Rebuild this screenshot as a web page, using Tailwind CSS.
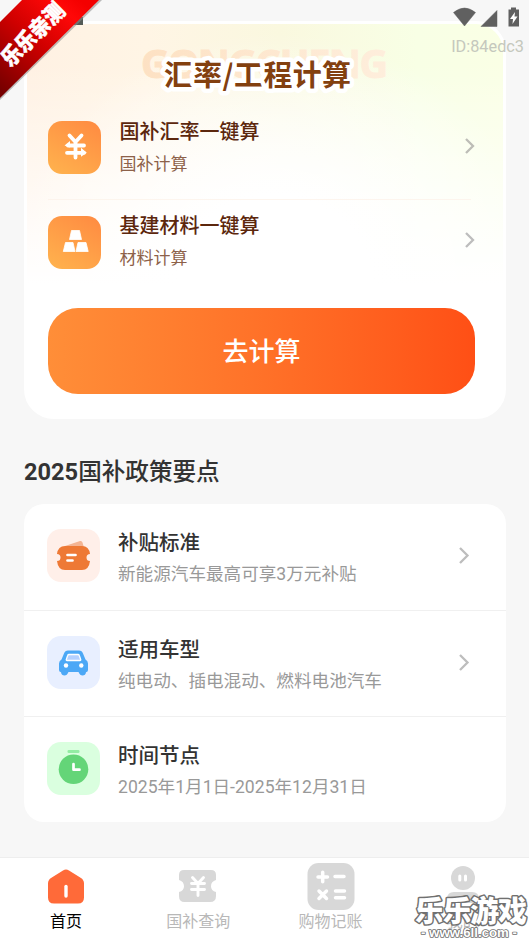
<!DOCTYPE html>
<html lang="zh-CN">
<head>
<meta charset="utf-8">
<meta name="viewport" content="width=device-width, initial-scale=1">
<title>国补计算</title>
<script src="https://cdn.jsdelivr.net/npm/@tailwindcss/browser@4"></script>
</head>
<body class="bg-[#f7f7f7] font-['Roboto','Noto_Sans_CJK_SC',sans-serif]">
<div class="relative flex h-[942px] w-[529px] flex-col overflow-hidden whitespace-nowrap">

  <main class="flex-1 px-6 pt-[21px] pr-[23px]">
    <!-- Calculator card -->
    <section class="flex h-[398px] flex-col rounded-[30px] border-[3px] border-white bg-white bg-[radial-gradient(ellipse_270px_250px_at_52%_66%,#ffffff_35%,transparent),linear-gradient(to_bottom,transparent_0,transparent_40px,#ffffff_260px),linear-gradient(to_right,#fff1e3,#fff5e5_25%,#faf8df_53%,#f8ffe5_82%,#faffe5)] pr-[22px] pl-[21.4px]">
      <div class="relative h-[72px] shrink-0">
        <svg class="absolute top-[19px] left-[92px] overflow-visible" width="260" height="48" viewBox="0 0 260 48">
          <defs><linearGradient id="ghost" x1="0" x2="1"><stop stop-color="#fde1c3"/><stop offset="1" stop-color="#feeedc"/></linearGradient></defs>
          <text x="1" y="35" textLength="247" font-family="Noto Sans, sans-serif" font-weight="700" font-size="39.500" fill="url(#ghost)" stroke="url(#ghost)" stroke-width="1">GONGCHENG</text>
        </svg>
        <svg class="absolute top-[28px] left-[106px] overflow-visible" width="208" height="50" viewBox="0 0 208 50">
          <text x="10" y="34" textLength="187" font-family="Noto Sans CJK SC, sans-serif" font-weight="700" font-size="29" fill="#83400f" stroke="#ffffff" stroke-width="9" stroke-linejoin="round" paint-order="stroke">汇率/工程计算</text>
        </svg>
      </div>
      <div class="mr-[10px] flex h-[104px] items-center border-b border-[#fdf3ea]/80 pb-[1px]">
        <svg class="shrink-0" width="53" height="53" viewBox="0 0 53 53">
          <defs><linearGradient id="tile" x1="0.8" y1="0" x2="0.2" y2="1"><stop stop-color="#ff8d42"/><stop offset="1" stop-color="#ffb04d"/></linearGradient></defs>
          <rect width="53" height="53" rx="14" fill="url(#tile)"/>
          <g stroke="#fff" stroke-width="3.800" stroke-linecap="round" stroke-linejoin="round" fill="none"><path d="M21.500 14.500l6 6.500 6-6.500M27.500 21v15.500M20 24.500h16M19 31.800h17"/></g>
          <path d="M16.500 24.500l5.500-4.500v6.500zM38.800 31.800l-5.800-5v9z" fill="#fff"/>
        </svg>
        <div class="ml-[18px] flex-1 pt-[1px]">
          <div class="text-[20px] leading-[28px] font-medium text-[#5c270d]">国补汇率一键算</div>
          <div class="mt-1 text-[17px] leading-[28px] text-[#8d6149]">国补计算</div>
        </div>
        <svg class="mr-[-4px] mb-[2px]" width="10" height="16" viewBox="0 0 10 16" fill="none" stroke="#bdbdb7" stroke-width="2.300"><path d="M1 1l7 7-7 7"/></svg>
      </div>
      <div class="mr-[10px] flex h-[84px] items-center">
        <svg class="shrink-0" width="53" height="53" viewBox="0 0 53 53">
          <rect width="53" height="53" rx="14" fill="url(#tile)"/>
          <g fill="#fff" stroke="#fff" stroke-linejoin="round" stroke-width=".8"><path d="M23.500 14.500h8l2 9H21.500zM17.500 26.500h7.500l2 9H15.300zM30 26.500h8l2.200 9H28z"/></g>
        </svg>
        <div class="ml-[18px] flex-1">
          <div class="text-[20px] leading-[28px] font-medium text-[#5c270d]">基建材料一键算</div>
          <div class="mt-1 text-[17px] leading-[28px] text-[#8d6149]">材料计算</div>
        </div>
        <svg class="mr-[-4px] mb-[4px]" width="10" height="16" viewBox="0 0 10 16" fill="none" stroke="#bdbdbd" stroke-width="2.300"><path d="M1 1l7 7-7 7"/></svg>
      </div>
      <button class="mt-[24px] h-[86px] w-[427px] rounded-[30px] bg-gradient-to-r from-[#ff8e38] to-[#ff4f15] pt-[2px] pr-[1px] text-[26px] font-medium text-white">去计算</button>
    </section>

    <h2 class="mt-[34px] text-[23.6px] leading-[38px] font-bold text-[#333]">2025<span class="font-medium">国补政策要点</span></h2>

    <!-- Policy list -->
    <section class="mt-[13px] h-[318px] rounded-[20px] bg-white">
      <div class="flex h-[107px] items-center border-b border-[#f0f0f0] pb-[3px] pl-[23px]">
        <svg class="shrink-0" width="53" height="53" viewBox="0 0 53 53">
          <rect width="53" height="53" rx="14" fill="#ffefe9"/>
          <path d="M18 17l15-5q2-.5 2.500 1.500l1.500 5z" fill="#f4b493"/>
          <path d="M18 17h17q7 0 8 8a3.300 3.300 0 0 0 0 7q-1 9-8 9H18q-7 0-8-9a3.300 3.300 0 0 0 0-7q1-8 8-8z" fill="#ee7935"/>
          <path d="M20.500 26h8M20.500 31.500h5" stroke="#fff" stroke-width="2.700" stroke-linecap="round"/>
        </svg>
        <div class="ml-[18px] flex-1 pt-[5px]">
          <div class="text-[20.5px] leading-[30px] font-medium text-[#333]">补贴标准</div>
          <div class="mt-[2px] text-[17.6px] leading-[28px] text-[#999]">新能源汽车最高可享3万元补贴</div>
        </div>
        <svg class="mr-[36px]" width="11" height="17" viewBox="0 0 11 17" fill="none" stroke="#bdbdbd" stroke-width="2.300"><path d="M1 1l7.500 7.500L1 16"/></svg>
      </div>
      <div class="flex h-[106px] items-center border-b border-[#f0f0f0] pb-[2px] pl-[23px]">
        <svg class="shrink-0" width="53" height="53" viewBox="0 0 53 53">
          <rect width="53" height="53" rx="14" fill="#e8efff"/>
          <path d="M21 14.500h11q3 0 4 3l2.500 6q2.500 1.500 2.500 4v6.500q0 2-2 2.300-.5 3.200-3.500 3.200-2.500 0-4-3.500H21.500q-1.500 3.500-4 3.500-3 0-3.500-3.200-2-.3-2-2.300v-6.500q0-2.500 2.500-4l2.500-6q1-3 4-3z" fill="#4ca8f6"/>
          <path d="M22 18.500h9q1 0 1.300 1l1.400 4q.3 1-.7 1H20q-1 0-.7-1l1.400-4q.3-1 1.300-1z" fill="#b4d0ff" stroke="#fff" stroke-width="1.300"/>
          <circle cx="19" cy="29.500" r="2.200" fill="#fff"/><circle cx="34.300" cy="29.500" r="2.200" fill="#fff"/>
        </svg>
        <div class="ml-[18px] flex-1 pt-[4px]">
          <div class="text-[20.5px] leading-[30px] font-medium text-[#333]">适用车型</div>
          <div class="mt-[2px] text-[17.6px] leading-[28px] text-[#999]">纯电动、插电混动、燃料电池汽车</div>
        </div>
        <svg class="mr-[36px]" width="11" height="17" viewBox="0 0 11 17" fill="none" stroke="#bdbdbd" stroke-width="2.300"><path d="M1 1l7.500 7.500L1 16"/></svg>
      </div>
      <div class="flex h-[105px] items-center pb-[2px] pl-[23px]">
        <svg class="shrink-0" width="53" height="53" viewBox="0 0 53 53">
          <rect width="53" height="53" rx="14" fill="#daffdf"/>
          <rect x="20.500" y="8" width="12" height="3" rx="1.300" fill="#93eda3"/>
          <circle cx="26.500" cy="27.300" r="14.800" fill="#64d578"/>
          <path d="M26.500 22v5.700h6" fill="none" stroke="#fff" stroke-width="2.700" stroke-linecap="round" stroke-linejoin="round"/>
        </svg>
        <div class="ml-[18px] flex-1 pt-[5px]">
          <div class="text-[20.5px] leading-[30px] font-medium text-[#333]">时间节点</div>
          <div class="mt-[2px] text-[17.6px] leading-[28px] text-[#999]">2025年1月1日-2025年12月31日</div>
        </div>
      </div>
    </section>
  </main>

  <!-- Tab bar -->
  <nav class="grid h-[85px] grid-cols-4 border-t border-[#eeeeee] bg-white text-center text-[16px] text-[#b8b8b8]">
    <div class="flex flex-col items-center pt-[5px] text-black">
      <svg width="48" height="48" viewBox="0 0 48 48"><path d="M21 7.500q3-2 6 0l12 7.500q3 2 3 5.500v14q0 6-6 6H12q-6 0-6-6v-14q0-3.500 3-5.500z" fill="#ff6a39"/><path d="M24 23.500v9.500" stroke="#fff" stroke-width="3.400" stroke-linecap="round"/></svg>
      <span class="leading-[21px]">首页</span>
    </div>
    <div class="flex flex-col items-center pt-[5px]">
      <svg width="48" height="48" viewBox="0 0 48 48"><path d="M10 7h27q5 0 5 5v5q-5 1.500-5 6.300T42 29v4q0 6-6 6H10.500q-5.500 0-5.500-6v-4q5-1 5-5.700T5 17v-5q0-5 5-5z" fill="#d8d8d8"/><path d="M18.500 14.500l5.500 6 5.500-6M24 20.500V32.500M17.500 20.500h13M17.500 26.500h13" fill="none" stroke="#fff" stroke-width="2.900" stroke-linecap="round" stroke-linejoin="round"/></svg>
      <span class="leading-[21px]">国补查询</span>
    </div>
    <div class="flex flex-col items-center pt-[5px]">
      <svg width="48" height="48" viewBox="0 0 48 48"><rect x=".500" y="0" width="47" height="47" rx="11" fill="#d8d8d8"/><path d="M11 14h9.500M15.700 9.300v9.500M28 13.500h9M12 28l7.500 7.500M19.500 28L12 35.500M28.500 28h9M28.500 34.800h9" stroke="#fff" stroke-width="3.500" stroke-linecap="round"/></svg>
      <span class="leading-[21px]">购物记账</span>
    </div>
    <div class="flex flex-col items-center pt-[5px]">
      <svg width="48" height="48" viewBox="0 0 48 48"><circle cx="24" cy="15" r="12" fill="#d8d8d8"/><path d="M20.800 13v4M26.500 13v4" stroke="#fff" stroke-width="3" stroke-linecap="round"/><path d="M8 40v-4q0-7 7-7h18q7 0 7 7v4z" fill="#d8d8d8"/></svg>
      <span class="leading-[21px]">我的</span>
    </div>
  </nav>

  <!-- Status overlay -->
  <svg class="absolute top-[7px] left-[453px]" width="70" height="21" viewBox="0 0 70 21" fill="#606060"><path d="M.5 5.500q11-9 22 0L11.500 19zM28 19.500H44V3.500z" stroke="#606060" stroke-width=".5"/><path d="M55.500 2.500h2.500V.5h5v2h3V19.500H55.500z"/><path d="M62 5l-5 7h3l-.5 5 5-7.500h-3z" fill="#fff"/></svg>
  <div class="absolute top-[37px] right-[5px] text-[16.3px] leading-[20px] text-[#c5c8bd]">ID:84edc3</div>

  <!-- Corner ribbon -->
  <svg class="absolute top-0 left-0" width="110" height="110" viewBox="0 0 110 110">
    <defs><linearGradient id="ribbon" gradientUnits="userSpaceOnUse" x1="0" y1="90" x2="80" y2="0"><stop stop-color="#760000"/><stop offset=".5" stop-color="#cf0000"/><stop offset=".85" stop-color="#ff0808"/><stop offset="1" stop-color="#f40000"/></linearGradient></defs>
    <path d="M74 17h9v8h-9z" fill="#555b57"/>
    <path d="M0 100V24L24 0h78z" fill="#888" opacity=".55"/>
    <path d="M0 98V22L22 0h77z" fill="url(#ribbon)"/>
    <text transform="translate(10.500 68) rotate(-45)" textLength="79" lengthAdjust="spacingAndGlyphs" font-family="Noto Sans CJK SC, sans-serif" font-weight="900" font-size="22" fill="#fff" stroke="#fff" stroke-width=".6">乐乐亲测</text>
  </svg>

  <!-- Site mark -->
  <svg class="absolute top-[890px] left-[411px]" width="118" height="52" viewBox="0 0 118 52" font-family="Noto Sans CJK SC, sans-serif" fill="#fff" stroke-linejoin="round">
    <g stroke="#707070">
      <text x="4" y="32" textLength="112" font-weight="900" font-size="29" stroke-width="3" paint-order="stroke" aria-hidden="false">乐乐游戏</text>
      <text x="10" y="47" textLength="96" lengthAdjust="spacingAndGlyphs" font-family="Liberation Sans, sans-serif" font-weight="700" font-size="12.500" stroke-width="1.600" paint-order="stroke">- www.6ll.com -</text>
    </g>
  </svg>
</div>
</body>
</html>
